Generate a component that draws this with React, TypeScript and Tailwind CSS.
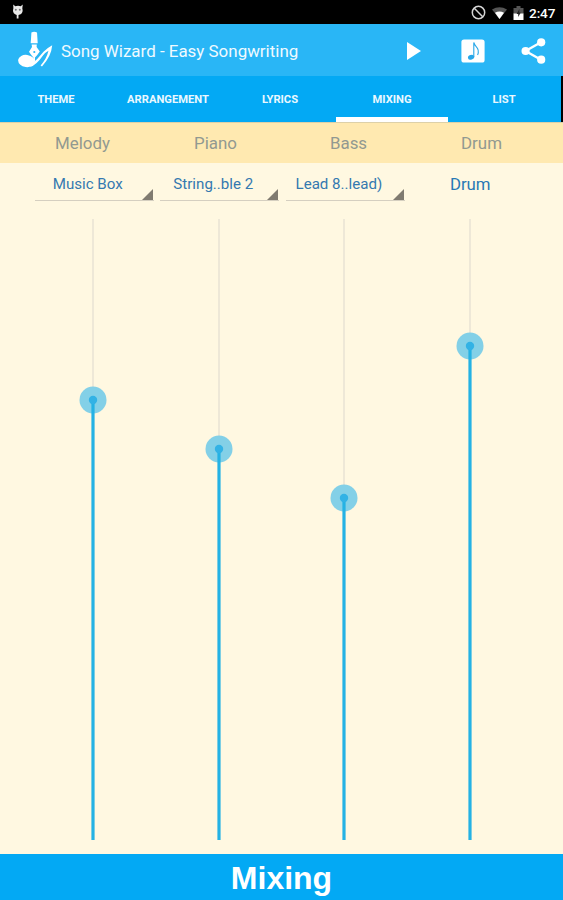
import React from 'react';
import clsx from 'clsx';

interface Channel {
  name: string;
  instrument: string;
  selectable: boolean;
  // distance from the top of the track to the thumb, in px
  level: number;
}

const tabs = ['THEME', 'ARRANGEMENT', 'LYRICS', 'MIXING', 'LIST'];

const channels: Channel[] = [
  { name: 'Melody', instrument: 'Music Box', selectable: true, level: 181 },
  { name: 'Piano', instrument: 'String..ble 2', selectable: true, level: 230 },
  { name: 'Bass', instrument: 'Lead 8..lead)', selectable: true, level: 279 },
  { name: 'Drum', instrument: 'Drum', selectable: false, level: 127 },
];

const TRACK_HEIGHT = 621;

const StatusBar: React.FC = () => (
  <div className="flex h-6 shrink-0 items-center bg-black pl-3 pr-[7px] text-white">
    <svg width="12" height="16" viewBox="0 0 12 16" fill="#e8e8e8">
      <path d="M1.2 0.6 3.3 2.2Q6 1.2 8.7 2.2L10.8 0.6 10.3 4.2Q11.5 8.2 8.6 10.2L6.5 11V14.5H4.7V11L3.1 10.2Q.1 8.2 1.4 4.2Z" />
      <circle cx="3.8" cy="5.7" r="1" fill="#777" />
      <circle cx="7.8" cy="5.7" r="1" fill="#777" />
    </svg>
    <div className="ml-auto flex items-center pt-px">
      <svg width="15" height="15" viewBox="0 0 15 15" fill="none" stroke="#d5d5d5" strokeWidth="1.5">
        <circle cx="7.5" cy="7.5" r="6.2" />
        <path d="M3.3 3.3 11.7 11.7" />
      </svg>
      <svg className="ml-[6px]" width="15" height="12" viewBox="0 0 15 12">
        <path d="M0 2.5Q7.5-2 15 2.5L7.5 12Z" fill="#555" />
        <path d="M3 5.8Q7.5 3 12 5.8L7.5 12Z" fill="#fff" />
      </svg>
      <svg className="ml-[6px]" width="11" height="14" viewBox="0 0 11 14">
        <path d="M3.5 0h4v2H10.5V8H.5V2h3Z" fill="#555" />
        <path d="M.5 7.5H10.5V14H.5Z" fill="#fff" />
        <path d="M6.4 3 3.6 8h1.6v3L7.8 6.4H6.4Z" fill="#222" />
      </svg>
      <span className="ml-[5px] w-[27px] whitespace-nowrap text-[13.6px] leading-6 font-medium tracking-[-0.1px]">2:47</span>
    </div>
  </div>
);

const Logo: React.FC = () => (
  <svg width="36" height="38" viewBox="0 0 36 38" fill="white">
    <path d="M13.4 1.4Q16.2.2 19 1.4L19.7 12.3H12.7Z" />
    <path d="M13.6 13.4H18.8L18.6 16 21.8 20.5Q19.5 24 17 26.5V30.3H15.4V26.5Q13 24 11 20.8L14 16Z" />
    <circle cx="16.3" cy="21" r="1.1" fill="#29b6f6" />
    <ellipse cx="8.5" cy="30" rx="8.4" ry="6.1" transform="rotate(8 8.5 30)" />
    <path d="M12 34.5Q20 28 25.5 20.8Q28.5 17.5 34.2 14.3Q33.3 25.5 24 35.4L22.6 34.4Q28.5 28 30.5 19.8Q27 21.5 25 24.6Q18 34.5 12.5 35.8Z" />
  </svg>
);

const AppBar: React.FC = () => (
  <header className="flex h-[52px] shrink-0 items-center bg-[#29b6f6] pl-[18px] pr-[17px] text-[#f0faff]">
    <Logo />
    <h1 className="mt-[3px] ml-[7px] w-[238px] whitespace-nowrap text-[16.95px]">Song Wizard - Easy Songwriting</h1>
    <div className="ml-auto flex items-center pt-px text-white">
      <button aria-label="Play">
        <svg width="14" height="18" viewBox="0 0 14 18" fill="currentColor">
          <path d="M0 0V18L14 9Z" />
        </svg>
      </button>
      <button className="ml-10" aria-label="Melody">
        <svg width="24" height="24" viewBox="0 0 24 24" fill="none">
          <rect x=".4" y=".4" width="23.2" height="23.2" rx="2.6" fill="currentColor" />
          <ellipse cx="10.1" cy="18.3" rx="3.2" ry="2.3" transform="rotate(-18 10.1 18.3)" fill="#29a7e8" />
          <path d="M12.8 18V3.5Q13.4 6 15.2 7.6Q18.6 11 16.6 16" stroke="#29a7e8" strokeWidth="1.1" />
        </svg>
      </button>
      <button className="ml-9" aria-label="Share">
        <svg width="25" height="26" viewBox="0 0 25 26" fill="currentColor">
          <path d="M20 4.3 4.5 13 20 21.7" fill="none" stroke="currentColor" strokeWidth="2.4" />
          <circle cx="20.2" cy="4.3" r="4.1" />
          <circle cx="4.6" cy="13" r="4.1" />
          <circle cx="20.2" cy="21.7" r="4.1" />
        </svg>
      </button>
    </div>
  </header>
);

const TabBar: React.FC<{ active: string }> = ({ active }) => (
  <nav className="flex h-[46px] shrink-0 border-r-2 border-black bg-[#03a9f4]">
    {tabs.map((tab) => (
      <button
        key={tab}
        className={clsx(
          'w-28 border-b-[5px] pt-[7px] text-[11.2px] font-bold text-[#eaf8ff]',
          tab === active ? 'border-white' : 'border-transparent',
        )}
      >
        {tab}
      </button>
    ))}
  </nav>
);

const Instrument: React.FC<{ channel: Channel }> = ({ channel }) => {
  if (!channel.selectable) {
    return <div className="w-[125.6px] pt-[9px] text-center text-[16.8px] leading-6 text-[#2879b5]">{channel.instrument}</div>;
  }
  return (
    <div className="w-[125.6px] pl-1">
      <button className="flex h-[38px] w-[119px] items-start border-b border-[#d5cfc0] pt-[9px]">
        <span className="w-[106px] whitespace-nowrap text-center text-[15.1px] leading-6 text-[#3479b0]">{channel.instrument}</span>
        <svg className="mt-[17px] ml-px" width="11" height="11" viewBox="0 0 11 11" fill="#807b70">
          <path d="M11 0V11H0Z" />
        </svg>
      </button>
    </div>
  );
};

const Fader: React.FC<{ level: number }> = ({ level }) => (
  <div className="flex w-[125.6px] justify-center">
    <svg width="28" height={TRACK_HEIGHT} viewBox={`0 0 28 ${TRACK_HEIGHT}`}>
      <path d={`M14 0V${level}`} stroke="#e9e3d3" strokeWidth="1.5" />
      <circle cx="14" cy={level} r="13.5" fill="#83d0e7" />
      <path d={`M14 ${level}V${TRACK_HEIGHT}`} stroke="#24b2e4" strokeWidth="3.2" />
      <circle cx="14" cy={level} r="4.2" fill="#32b2e5" />
    </svg>
  </div>
);

const App: React.FC = () => {
  return (
    <div className="flex h-[900px] w-[563px] flex-col overflow-hidden bg-[#fff8e1] font-['Roboto',sans-serif]">
      <StatusBar />
      <AppBar />
      <TabBar active="MIXING" />
      <div className="flex h-[41px] shrink-0 border-t border-[#ddd0a8] bg-[#ffe9b0] pl-4">
        {channels.map((channel) => (
          <div key={channel.name} className="w-[133px] text-center text-[16.9px] leading-10 text-[#929991]">
            {channel.name}
          </div>
        ))}
      </div>
      <div className="flex h-14 shrink-0 pl-[30.7px]">
        {channels.map((channel) => (
          <Instrument key={channel.name} channel={channel} />
        ))}
      </div>
      <main className="flex flex-1 pl-[30.2px]">
        {channels.map((channel) => (
          <Fader key={channel.name} level={channel.level} />
        ))}
      </main>
      <footer className="flex h-[46px] shrink-0 items-center justify-center bg-[#03a9f4] pt-0.5 font-['Liberation_Sans',sans-serif] text-[32px] font-bold text-white">
        Mixing
      </footer>
    </div>
  );
};

export default App;
